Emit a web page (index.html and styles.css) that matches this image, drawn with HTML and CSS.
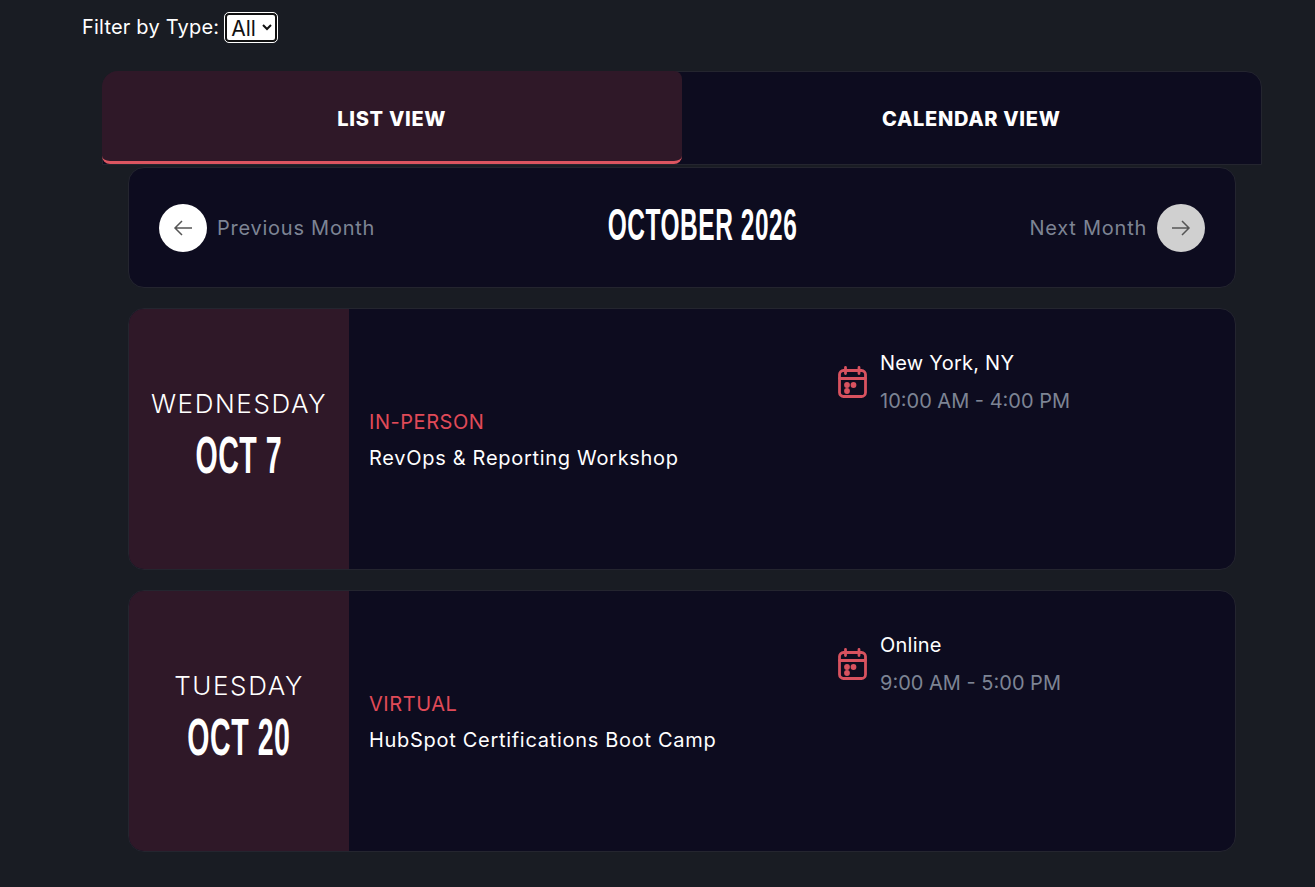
FILE: index.html
```html
<!DOCTYPE html>
<html lang="en">
<head>
<meta charset="utf-8">
<title>Events</title>
<link rel="stylesheet" href="styles.css">
</head>
<body>
<div class="filter">
  <label class="filter-label" for="type">Filter by Type:</label>
  <select id="type" class="filter-select"><option>All</option></select>
</div>
<div class="tabs">
  <div class="tab tab-active">LIST VIEW</div>
  <div class="tab">CALENDAR VIEW</div>
</div>
<main class="list">
  <section class="month-bar">
    <div class="month-link">
      <span class="circle circle-white"><svg class="arrow" viewBox="0 0 24 24"><path d="M21 12H4M11 5l-7 7 7 7"/></svg></span>
      <span>Previous Month</span>
    </div>
    <h1 class="month-title"><span class="tall">OCTOBER 2026</span></h1>
    <div class="month-link">
      <span>Next Month</span>
      <span class="circle circle-grey"><svg class="arrow" viewBox="0 0 24 24"><path d="M3 12h17M13 5l7 7-7 7"/></svg></span>
    </div>
  </section>

  <article class="card">
    <div class="date">
      <div class="weekday">WEDNESDAY</div>
      <div class="day"><span class="tall">OCT 7</span></div>
    </div>
    <div class="info">
      <div class="type">IN-PERSON</div>
      <div class="name">RevOps &amp; Reporting Workshop</div>
    </div>
    <div class="where">
      <svg class="cal" viewBox="0 0 32 32"><rect x="2.500" y="4.500" width="26" height="26" rx="4"/><path d="M2.500 12.500h26M8.500 1.500v6M22 1.500v6"/><circle class="dot" cx="10" cy="19" r="2.900"/><circle class="dot" cx="16.500" cy="19" r="2.900"/><circle class="dot" cx="10" cy="25" r="2.900"/></svg>
      <div>
        <div class="place">New York, NY</div>
        <div class="time">10:00 AM - 4:00 PM</div>
      </div>
    </div>
  </article>

  <article class="card">
    <div class="date">
      <div class="weekday">TUESDAY</div>
      <div class="day"><span class="tall">OCT 20</span></div>
    </div>
    <div class="info">
      <div class="type">VIRTUAL</div>
      <div class="name">HubSpot Certifications Boot Camp</div>
    </div>
    <div class="where">
      <svg class="cal" viewBox="0 0 32 32"><rect x="2.500" y="4.500" width="26" height="26" rx="4"/><path d="M2.500 12.500h26M8.500 1.500v6M22 1.500v6"/><circle class="dot" cx="10" cy="19" r="2.900"/><circle class="dot" cx="16.500" cy="19" r="2.900"/><circle class="dot" cx="10" cy="25" r="2.900"/></svg>
      <div>
        <div class="place">Online</div>
        <div class="time">9:00 AM - 5:00 PM</div>
      </div>
    </div>
  </article>
</main>
</body>
</html>
```
FILE: styles.css
```css
* { box-sizing: border-box; }
html, body { margin: 0; padding: 0; }
body {
  background: #191c23;
  color: #fff;
  font-family: "Inter", "Open Sans", sans-serif;
  font-size: 20px;
  height: 887px;
  overflow: hidden;
}
.filter {
  height: 71px;
  padding: 13px 0 0 82px;
  display: flex;
  align-items: flex-start;
  gap: 6px;
}
.filter-label { line-height: 29px; font-size: 20px; letter-spacing: .2px; }
.filter-select {
  width: 52px;
  height: 29px;
  font-family: "Inter", sans-serif;
  font-size: 21px;
  background: #fff;
  color: #111;
  border: 2px solid #111;
  outline: 1px solid #fff;
  outline-offset: 0;
  border-radius: 4px;
  padding: 0;
}
.tabs {
  margin-left: 102px;
  width: 1160px;
  height: 94px;
  display: flex;
  background: #0d0c1f;
  border: 1px solid #24252f;
  border-radius: 16px 16px 0 0;
}
.tab {
  flex: 1;
  display: flex;
  align-items: center;
  justify-content: center;
  font-size: 20px;
  font-weight: 800;
  letter-spacing: .7px;
  padding-top: 2px;
}
.tab-active {
  background: #2f1828;
  border-bottom: 3px solid #dc5560;
  border-radius: 16px 8px 8px 8px;
  margin: -1px 0 0 -1px;
  padding-top: 5px;
}
.list {
  margin: 2px 0 0 128px;
  width: 1108px;
  display: flex;
  flex-direction: column;
  gap: 20px;
}
.month-bar {
  height: 121px;
  background: #0d0c1f;
  border: 1px solid #24252f;
  border-radius: 16px;
  padding: 0 30px;
  display: flex;
  align-items: center;
  justify-content: space-between;
}
.month-link {
  display: flex;
  align-items: center;
  gap: 10px;
  color: #7d8494;
  font-size: 20px;
  letter-spacing: .75px;
}
.circle {
  width: 48px;
  height: 48px;
  border-radius: 50%;
  display: flex;
  align-items: center;
  justify-content: center;
}
.circle-white { background: #fff; }
.circle-grey { background: #d0d0d0; }
.arrow {
  width: 24px;
  height: 24px;
  fill: none;
  stroke: #555;
  stroke-width: 1.500;
}
.month-title {
  margin: 0 0 6px;
  font-family: "Liberation Sans Narrow", "Liberation Sans", sans-serif;
  font-size: 36px;
  font-weight: 700;
  line-height: 40px;
  letter-spacing: .8px;
}
.tall { display: inline-block; transform: scale(.68, 1.25); }
.card {
  height: 262px;
  background: #0d0c1f;
  border: 1px solid #24252f;
  border-radius: 16px;
  display: flex;
  overflow: hidden;
}
.date {
  width: 220px;
  flex: none;
  background: #2f1828;
  display: flex;
  flex-direction: column;
  align-items: center;
  justify-content: center;
  padding-bottom: 9px;
}
.weekday { font-size: 26px; line-height: 32px; font-weight: 300; letter-spacing: 1.6px; }
.day {
  font-family: "Liberation Sans Narrow", "Liberation Sans", sans-serif;
  font-size: 42px;
  font-weight: 700;
  line-height: 52px;
  letter-spacing: .8px;
  margin-top: 9px;
}
.info {
  width: 488px;
  flex: none;
  padding: 2px 0 0 20px;
  display: flex;
  flex-direction: column;
  justify-content: center;
}
.type { color: #e04a58; font-size: 20px; line-height: 26px; letter-spacing: .55px; }
.name { font-size: 20px; line-height: 26px; margin-top: 10px; letter-spacing: .7px; }
.where {
  display: flex;
  gap: 11px;
  padding-top: 35px;
  align-items: flex-start;
}
.cal {
  width: 32px;
  height: 32px;
  margin-top: 22px;
  fill: none;
  stroke: #d8525f;
  stroke-width: 2.800;
  stroke-linecap: round;
}
.dot { fill: #d8525f; stroke: none; }
.place { font-size: 20px; line-height: 38px; letter-spacing: .25px; }
.time { color: #7d8494; font-size: 20px; line-height: 38px; letter-spacing: 0; }
```
